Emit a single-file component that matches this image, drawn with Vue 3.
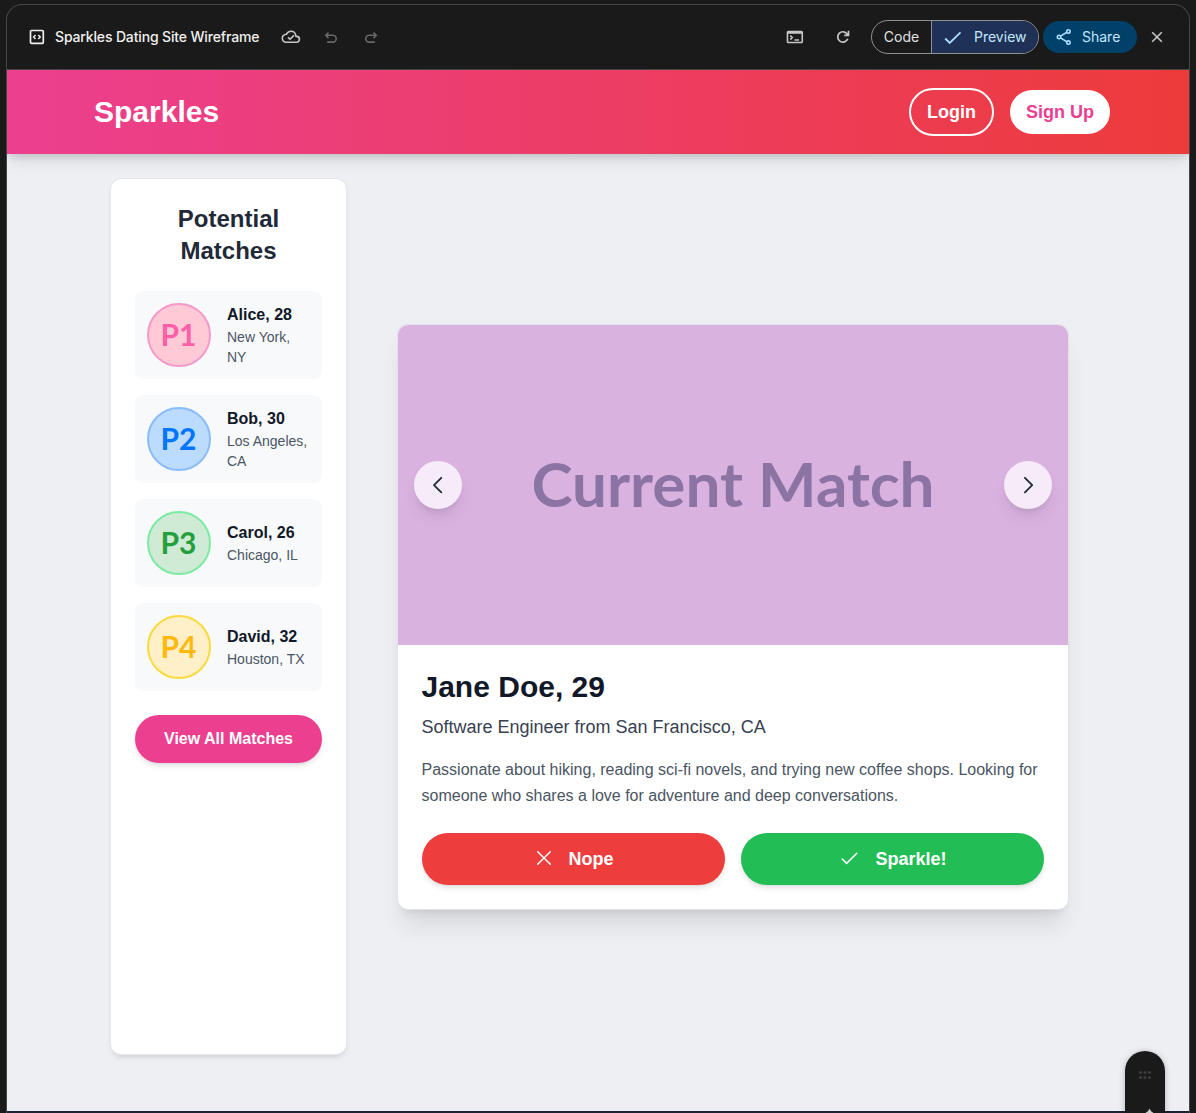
<script setup>
const matches = [
  { tag: 'P1', name: 'Alice, 28', place: 'New York, NY', tone: 'pink' },
  { tag: 'P2', name: 'Bob, 30', place: 'Los Angeles, CA', tone: 'blue' },
  { tag: 'P3', name: 'Carol, 26', place: 'Chicago, IL', tone: 'green' },
  { tag: 'P4', name: 'David, 32', place: 'Houston, TX', tone: 'yellow' },
]
</script>

<template>
  <div class="screen">
    <div class="frame">
      <div class="toolbar">
        <svg class="i-code" width="16" height="16" viewBox="0 0 16 16" fill="none" stroke="#f0f0f0" stroke-width="1.7">
          <rect x="1.500" y="1.500" width="12.8" height="12.8" rx="1" />
          <path d="M6.500 5.900 4.600 7.900l1.900 2M9.300 5.900l1.900 2-1.900 2" stroke-width="1.5" />
        </svg>
        <span class="title">Sparkles Dating Site Wireframe</span>
        <svg class="i-cloud" width="20" height="16" viewBox="0 0 20 16" fill="none" stroke="#c4c7c5" stroke-width="1.6" stroke-linejoin="round">
          <path d="M5 13.2h10.3a2.9 2.9 0 0 0 .4-5.8h-.8C14.6 4.300 12.600 2.200 10 2.200c-2.100 0-3.800 1.200-4.500 3.100C3 5.500 1.300 7.200 1.300 9.300c0 2.200 1.700 3.900 3.700 3.900Z" />
          <path d="m7 8.300 2 2 3.900-3.900" />
        </svg>
        <svg class="i-undo" width="14" height="14" viewBox="0 0 14 14" fill="none" stroke="#686868" stroke-width="1.6">
          <path d="M4.500 1.500 1.800 4.300l2.700 2.800M2 4.300h6.800a3.400 3.400 0 0 1 0 6.800H3.200" />
        </svg>
        <svg class="i-redo" width="14" height="14" viewBox="0 0 14 14" fill="none" stroke="#686868" stroke-width="1.6">
          <path d="m9.500 1.500 2.700 2.800-2.700 2.800M12 4.300H5.200a3.400 3.400 0 0 0 0 6.800h5.600" />
        </svg>
        <span class="spacer"></span>
        <svg class="i-term" width="18" height="14" viewBox="0 0 18 14" fill="none" stroke="#c4c7c5" stroke-width="1.6">
          <rect x="1.450" y="1.500" width="14.800" height="11" rx=".8" />
          <path d="M1.500 2.500h14.500" stroke-width="2.600" />
          <path d="m4.300 5.600 2 2-2 2M8.500 10h4.500" stroke-width="1.500" />
        </svg>
        <svg class="i-refresh" width="14" height="14" viewBox="0 0 14 14" fill="none" stroke="#c4c7c5" stroke-width="1.700">
          <path d="M11.800 8.800A5.200 5.200 0 1 1 11.200 4L12.400 5.200M8.200 5.400h4.300V.8" />
        </svg>
        <div class="segment">
          <span class="seg-code"><span class="lift">Code</span></span>
          <span class="seg-preview">
            <svg width="18" height="14" viewBox="0 0 18 14" fill="none" stroke="#a8dafe" stroke-width="1.900"><path d="m1.200 7.500 4.500 4.500L16.500 1.300" /></svg>
            <span class="preview-text lift">Preview</span>
          </span>
        </div>
        <div class="share">
          <svg width="16" height="18" viewBox="0 0 16 18" fill="none" stroke="#a8dafe" stroke-width="1.600">
            <circle cx="12.400" cy="3.400" r="1.700" /><circle cx="3" cy="9" r="1.700" /><circle cx="12.400" cy="14.600" r="1.700" />
            <path d="m4.500 8.100 6.400-3.800M4.500 9.900l6.400 3.800" />
          </svg>
          <span class="share-text lift">Share</span>
        </div>
        <svg class="i-close" width="12" height="12" viewBox="0 0 12 12" fill="none" stroke="#c4c7c5" stroke-width="1.600"><path d="m1.200 1.200 9.600 9.600M10.800 1.200l-9.600 9.600" /></svg>
      </div>

      <div class="page">
        <header class="site-header">
          <h1>Sparkles</h1>
          <button class="login">Login</button>
          <button class="signup">Sign Up</button>
        </header>
        <main>
          <aside>
            <h2>Potential Matches</h2>
            <ul>
              <li v-for="m in matches" :key="m.tag">
                <span class="avatar" :class="m.tone">{{ m.tag }}</span>
                <div class="who">
                  <b>{{ m.name }}</b>
                  <p>{{ m.place }}</p>
                </div>
              </li>
            </ul>
            <button class="view-all">View All Matches</button>
          </aside>
          <section class="card">
            <div class="photo">
              <button class="nav"><svg width="24" height="24" viewBox="0 0 24 24" fill="none" stroke="#1f2937" stroke-width="1.800" stroke-linecap="round" stroke-linejoin="round"><path d="M15.300 4.800 8 12.100l7.300 7.300" /></svg></button>
              <span class="caption">Current Match</span>
              <button class="nav"><svg width="24" height="24" viewBox="0 0 24 24" fill="none" stroke="#1f2937" stroke-width="1.800" stroke-linecap="round" stroke-linejoin="round"><path d="m8.900 4.800 7.300 7.300-7.300 7.300" /></svg></button>
            </div>
            <div class="info">
              <h3>Jane Doe, 29</h3>
              <p class="job">Software Engineer from San Francisco, CA</p>
              <p class="bio">Passionate about hiking, reading sci-fi novels, and trying new coffee shops. Looking for<br />someone who shares a love for adventure and deep conversations.</p>
              <div class="actions">
                <button class="nope">
                  <svg width="16" height="16" viewBox="0 0 16 16" fill="none" stroke="#fff" stroke-width="1.500" stroke-linecap="round"><path d="m1.700 1.700 12.600 12.600M14.300 1.700 1.700 14.300" /></svg>
                  <span>Nope</span>
                </button>
                <button class="yes">
                  <svg width="18" height="16" viewBox="0 0 18 16" fill="none" stroke="#fff" stroke-width="1.500" stroke-linecap="round" stroke-linejoin="round"><path d="m2.200 9 4.400 4.400L16.800 3.200" /></svg>
                  <span>Sparkle!</span>
                </button>
              </div>
            </div>
          </section>
        </main>
      </div>
      <div class="edge"></div>
    </div>
    <div class="dock">
      <svg width="40" height="62" viewBox="0 0 40 62">
        <g fill="#3c3c3c">
          <circle cx="15.500" cy="21.500" r="1.600" /><circle cx="20" cy="21.500" r="1.600" /><circle cx="24.500" cy="21.500" r="1.600" />
          <circle cx="15.500" cy="26.500" r="1.600" /><circle cx="20" cy="26.500" r="1.600" /><circle cx="24.500" cy="26.500" r="1.600" />
        </g>
        <path d="M24.500 57.500q.8 3 4 4.500h-8q3.200-1.500 4-4.500Z" fill="#d0d0d0" />
      </svg>
    </div>
  </div>
</template>

<style>
html, body { margin: 0; background: #1a1a1a; }
</style>
<style scoped>
* { box-sizing: border-box; }
h1, h2, h3, p, ul { margin: 0; padding: 0; }
svg { flex: none; display: block; }
button { border: 0; padding: 0; font-family: inherit; font-weight: 700; white-space: nowrap; }
.screen { position: relative; width: 1196px; height: 1113px; padding: 4px 6px 0; overflow: hidden; background: #1a1a1a; font-family: "Liberation Sans", Arial, sans-serif; }
.frame { height: 1109px; display: flex; flex-direction: column; border: 1px solid #444746; border-bottom: 0; border-radius: 16px 16px 0 0; overflow: hidden; }
.toolbar { height: 65px; flex: none; display: flex; align-items: center; border-bottom: 1px solid #444746; font-family: Inter, sans-serif; font-size: 14px; font-weight: 500; color: #f0f0f0; }
.title { width: 204px; margin-left: 10px; padding-bottom: 2px; white-space: nowrap; letter-spacing: -.15px; }
.lift { padding-bottom: 2px; }
.i-code { margin-left: 22px; }
.i-cloud { margin-left: 22px; }
.i-undo { margin-left: 23px; margin-top: 1px; }
.i-redo { margin-left: 26px; margin-top: 1px; }
.spacer { flex: 1; }
.i-refresh { margin-left: 32px; margin-right: 21px; }
.segment { width: 168px; height: 34px; display: flex; border: 1px solid #8e918f; border-radius: 17px; overflow: hidden; font-weight: 400; }
.seg-code { width: 59px; display: flex; align-items: center; justify-content: center; color: #e3e3e3; }
.seg-preview { flex: 1; display: flex; align-items: center; background: #1f3156; border-left: 1px solid #8e918f; color: #c2e7ff; padding-left: 12px; }
.seg-preview svg { margin-top: 2px; }
.preview-text { margin-left: 12px; }
.share { width: 94px; height: 32px; margin-left: 4px; display: flex; align-items: center; padding-left: 13px; border-radius: 16px; background: #004069; color: #c2e7ff; font-weight: 400; }
.share-text { margin-left: 10px; }
.i-close { margin: 0 26px 0 14px; }
.page { flex: 1; display: flex; flex-direction: column; background: #edeff3; }
.site-header { position: relative; height: 84px; flex: none; display: flex; align-items: center; padding: 0 79px 0 87px; background: linear-gradient(90deg, #ec3f8f, #ed3b3b); box-shadow: 0 4px 6px -1px #0000001a, 0 10px 15px -3px #0000001a; color: #fff; }
.site-header h1 { flex: 1; font-size: 30px; line-height: 36px; }
.site-header button { border-radius: 24px; font-size: 18px; }
.login { width: 85px; height: 48px; border: 2px solid #fff; background: none; color: #fff; }
.signup { width: 100px; height: 44px; margin-left: 16px; background: #fff; color: #ec3f8f; }
main { display: flex; align-items: center; padding: 25px 0 0 104px; }
aside { width: 235px; height: 875px; flex: none; padding: 24px; border-radius: 10px; background: #fff; box-shadow: 0 0 0 1px #e5e7eb, 0 4px 6px -1px #0000001a, 0 2px 4px -2px #0000001a; }
h2 { margin-bottom: 24px; text-align: center; font-size: 24px; line-height: 32px; color: #1f2937; }
ul { list-style: none; display: flex; flex-direction: column; gap: 16px; }
li { height: 88px; display: flex; align-items: center; gap: 16px; padding: 12px; border-radius: 8px; background: #f8f9fb; }
.avatar { width: 64px; height: 64px; flex: none; display: flex; align-items: center; justify-content: center; padding: 0 1px 2px 0; border: 2px solid; border-radius: 50%; font: 700 30px Lato, sans-serif; }
.pink { color: #ff5fa9; background: #ffcad5; border-color: #f49acb; }
.blue { color: #0075ff; background: #bbdbff; border-color: #8bbcfa; }
.green { color: #259f3e; background: #cfead5; border-color: #7ceba1; }
.yellow { color: #ffb90b; background: #fff0c7; border-color: #fbda3d; }
.who b { display: block; font-size: 16px; line-height: 24px; color: #111827; white-space: nowrap; }
.who p { font-size: 14px; line-height: 20px; color: #4b5563; }
.view-all { width: 187px; height: 48px; margin-top: 24px; border-radius: 24px; background: #ec3f8f; color: #fff; font-size: 16px; box-shadow: 0 4px 6px -1px #0000001a, 0 2px 4px -2px #0000001a; }
.card { width: 670px; margin-left: 52px; border-radius: 10px; background: #fff; overflow: hidden; box-shadow: 0 0 0 1px #e1e3e8, 0 20px 25px -5px #0000001a, 0 8px 10px -6px #0000001a; }
.photo { height: 320px; display: flex; align-items: center; justify-content: space-between; padding: 0 16px; background: #dab2e0; }
.nav { width: 48px; height: 48px; display: flex; align-items: center; justify-content: center; border-radius: 50%; background: #f6ebf8; box-shadow: 0 10px 15px -3px #0000001a, 0 4px 6px -4px #0000001a; }
.caption { padding-bottom: 3px; font: 700 62px Lato, sans-serif; color: #8b73a3; white-space: nowrap; }
.info { height: 264px; padding: 24px 24px 24px 23.5px; }
h3 { font-size: 30px; line-height: 36px; color: #111827; margin-bottom: 8px; }
.job { font-size: 18px; line-height: 28px; color: #374151; margin-bottom: 16px; }
.bio { font-size: 16px; line-height: 26px; color: #4b5563; margin-bottom: 24px; white-space: nowrap; }
.actions { display: flex; gap: 16px; margin-left: .5px; }
.actions button { flex: 1; height: 52px; display: flex; align-items: center; justify-content: center; gap: 17px; padding-left: 2px; border-radius: 26px; color: #fff; font-size: 18px; box-shadow: 0 4px 6px -1px #0000001a, 0 2px 4px -2px #0000001a; }
.actions svg { margin-top: -2px; }
.actions span { padding-top: 1px; }
.nope { background: #ee3d3d; }
.yes { background: #22be55; }
.edge { height: 2px; flex: none; background: #1b2232; }
.dock { position: absolute; left: 1125px; top: 1051px; width: 40px; height: 62px; border-radius: 20px 20px 0 0; background: #1a1a1a; box-shadow: 0 1px 6px #00000040; }
</style>
